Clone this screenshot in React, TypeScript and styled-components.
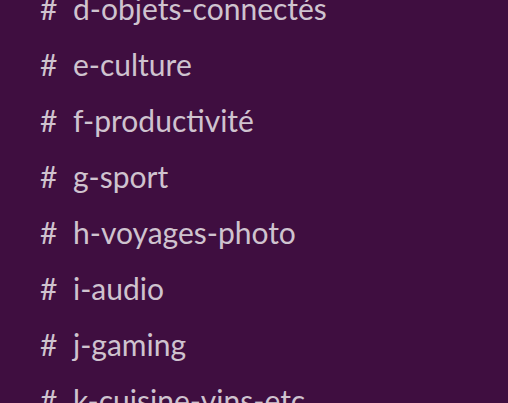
import React from "react";
import styled, { createGlobalStyle } from "styled-components";

const Global = createGlobalStyle`
  html, body { margin: 0; padding: 0; background: #3f0e40; overflow: hidden; }
  body { font-family: Lato, "Noto Sans", sans-serif; }
`;

const Sidebar = styled.nav`
  width: 508px;
  height: 403px;
  background: #3f0e40;
  overflow: hidden;
`;

const List = styled.ul`
  list-style: none;
  margin: -20px 0 0 0;
  padding: 0 0 0 40px;
  display: flex;
  flex-direction: column;
`;

const Row = styled.li`
  display: flex;
  align-items: baseline;
  height: 56px;
  line-height: 56px;
  font-size: 30px;
  color: #cfc3cf;
  white-space: nowrap;
  font-feature-settings: "liga" 1;
`;

const Hash = styled.span`
  width: 33px;
  flex: none;
`;

const channels = [
  "d-objets-connectés",
  "e-culture",
  "f-productivité",
  "g-sport",
  "h-voyages-photo",
  "i-audio",
  "j-gaming",
  "k-cuisine-vins-etc",
];

export default function App() {
  return (
    <>
      <Global />
      <Sidebar>
        <List>
          {channels.map((c) => (
            <Row key={c}>
              <Hash>#</Hash>
              <span>{c}</span>
            </Row>
          ))}
        </List>
      </Sidebar>
    </>
  );
}
